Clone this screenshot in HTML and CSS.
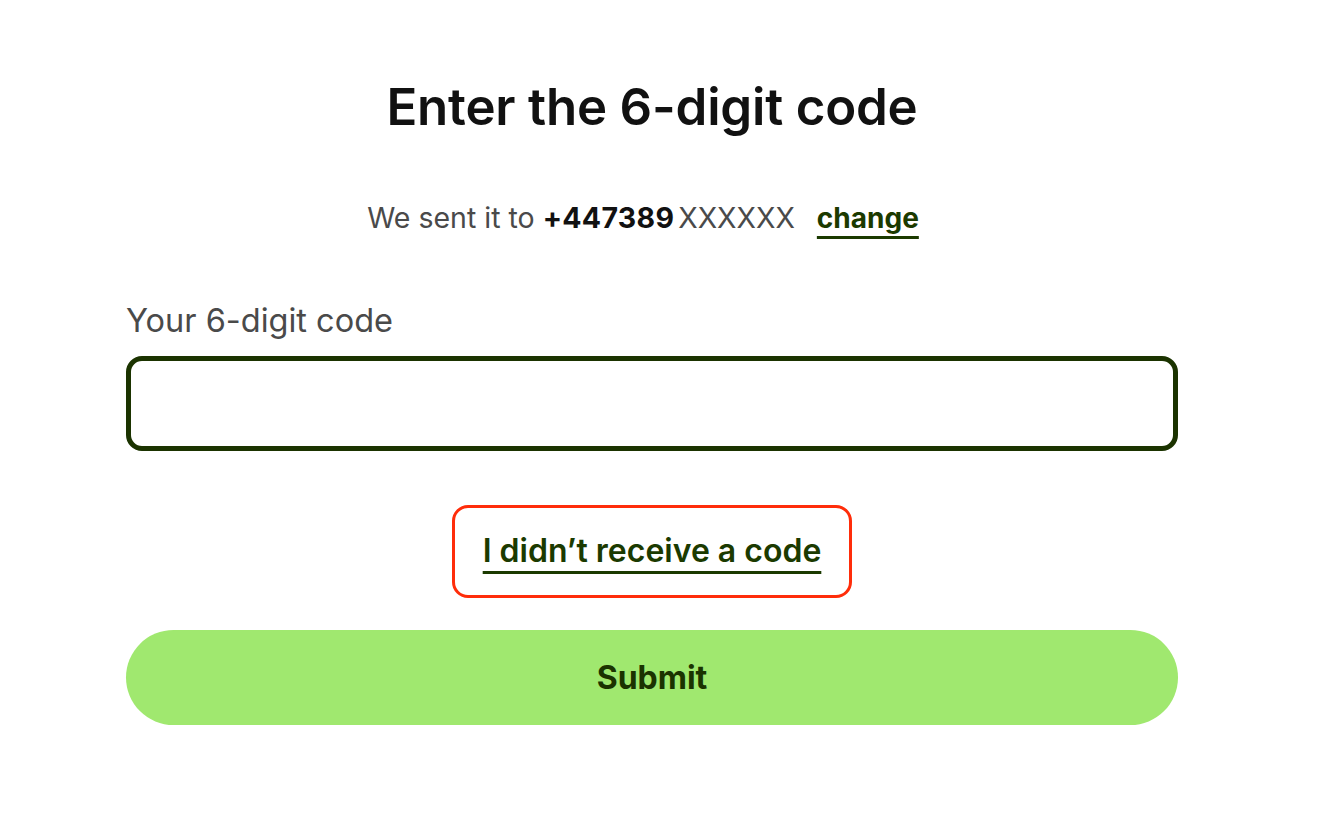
FILE: index.html
```html
<!DOCTYPE html>
<html lang="en">
<head>
<meta charset="utf-8">
<title>Enter the 6-digit code</title>
<link rel="stylesheet" href="styles.css">
</head>
<body>
<main class="page">
  <h1 class="title">Enter the 6-digit code</h1>
  <p class="sent">We sent it to <strong class="phone">+447389</strong><span class="masked">XXXXXX</span><a class="change" href="#">change</a></p>
  <form class="form">
    <label class="label" for="code">Your 6-digit code</label>
    <input class="input" id="code" type="text" inputmode="numeric">
    <div class="resend-row">
      <a class="resend" href="#">I didn’t receive a code</a>
    </div>
    <button class="submit" type="button">Submit</button>
  </form>
</main>
</body>
</html>
```
FILE: styles.css
```css
* { box-sizing: border-box; }
html, body { margin: 0; padding: 0; background: #ffffff; }
body {
  font-family: Inter, "Noto Sans", sans-serif;
  color: #111111;
}
.page {
  width: 1052px;
  margin: 0 0 0 126px;
  padding-top: 72px;
  display: flex;
  flex-direction: column;
  align-items: stretch;
}
.title {
  margin: 0;
  text-align: center;
  font-size: 51px;
  font-weight: 600;
  line-height: 70px;
  letter-spacing: -0.2px;
  color: #111111;
}
.sent {
  margin: 56px 0 0;
  padding-right: 18px;
  text-align: center;
  font-size: 28.5px;
  line-height: 40px;
  color: #4a4a4a;
}
.phone {
  font-weight: 700;
  color: #111111;
  letter-spacing: 0.3px;
}
.masked {
  margin-left: 4px;
}
.change {
  margin-left: 22px;
  color: #1b3a00;
  font-weight: 700;
  font-size: 28px;
  text-decoration: underline;
  text-decoration-thickness: 3px;
  text-underline-offset: 8px;
}
.form {
  display: flex;
  flex-direction: column;
  margin-top: 63px;
}
.label {
  font-size: 32.5px;
  line-height: 40px;
  color: #4a4a4a;
  margin-bottom: 15px;
}
.input {
  height: 95px;
  border: 5px solid #1b3300;
  border-radius: 16px;
  background: #fff;
  font-family: inherit;
  font-size: 28px;
  padding: 0 20px;
  outline: none;
}
.resend-row {
  display: flex;
  justify-content: center;
  margin-top: 54px;
}
.resend {
  display: inline-block;
  padding: 23px 28px 24px;
  border: 3px solid #ff2d0a;
  border-radius: 16px;
  color: #1b3a00;
  font-size: 32px;
  font-weight: 600;
  line-height: 40px;
  text-decoration: underline;
  text-decoration-thickness: 3px;
  text-underline-offset: 9px;
}
.submit {
  margin-top: 32px;
  height: 95px;
  border: none;
  border-radius: 48px;
  background: #a0e86f;
  color: #1b3300;
  font-family: inherit;
  font-size: 32px;
  font-weight: 700;
}
```
